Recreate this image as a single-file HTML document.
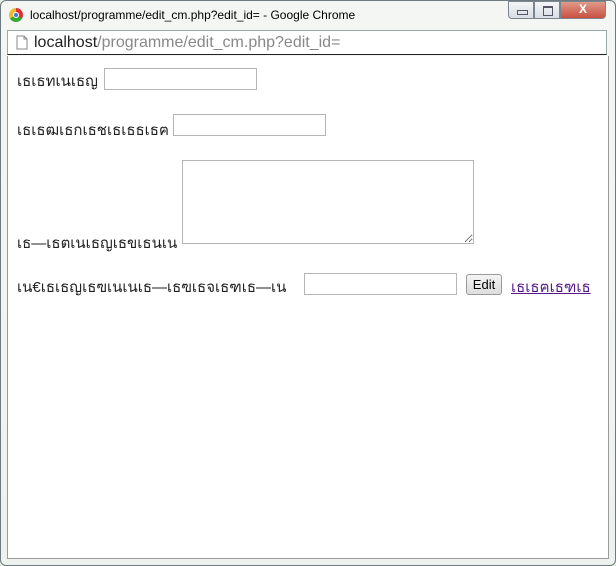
<!DOCTYPE html>
<html><head><meta charset="utf-8"><style>
body{margin:0;width:616px;height:566px;overflow:hidden;background:#e9efe9;font-family:"Liberation Sans",sans-serif;position:relative}
.frame{position:absolute;left:0;top:0;width:614px;height:564px;border:1px solid #6f7a80;border-radius:6px;background:linear-gradient(#f4f6f4,#eef2ee)}
.title{position:absolute;left:30px;top:8px;font-size:12px;color:#000}
.logo{position:absolute;left:9px;top:8px;width:14px;height:14px;border-radius:50%;background:conic-gradient(#d33 0 120deg,#3a3 120deg 240deg,#eb3 240deg);}
.logo:after{content:"";position:absolute;left:4px;top:4px;width:6px;height:6px;border-radius:50%;background:#47c;border:1px solid #fff;box-sizing:border-box}
.btns{position:absolute;left:508px;top:1px;height:19px;display:flex}
.btns div{height:18px;border:1px solid #7a8590;box-sizing:border-box;background:linear-gradient(#f4f6f8,#d8dee4);position:relative}
.addr{position:absolute;left:7px;top:30px;width:600px;height:25px;background:#fff;border:1px solid #9aa;border-bottom:1px solid #222;box-sizing:border-box}
.addr span{position:absolute;left:26px;top:3px;font-size:16px;color:#888}
.addr b{font-weight:normal;color:#222}
.content{position:absolute;left:7px;top:56px;width:602px;height:503px;background:#fff;border:1px solid #999;border-top:none;box-sizing:border-box;font-size:15px;color:#222}
.row{position:absolute;left:9px;white-space:nowrap}
input.t{position:absolute;height:22px;border:1px solid #b5b5b5;box-sizing:border-box}
a{color:#551a8b}
</style></head><body>
<div class="frame"></div>
<div class="logo"></div>
<div class="title">localhost/programme/edit_cm.php?edit_id= - Google Chrome</div>
<div class="btns"><div style="width:26px;border-radius:0 0 0 4px"><span style="position:absolute;left:8px;top:8px;width:9px;height:3px;border:1px solid #556"></span></div><div style="width:26px"><span style="position:absolute;left:8px;top:4px;width:8px;height:7px;border:1px solid #556;border-top-width:2px"></span></div><div style="width:46px;background:linear-gradient(#e09a8a,#c85040);border-radius:0 0 4px 0;color:#fff;font-size:12px;text-align:center;font-weight:bold">X</div></div>
<div class="addr"><svg style="position:absolute;left:8px;top:4px" width="12" height="15"><path d="M1 1h7l3 3v10H1z M8 1v3h3" fill="#fff" stroke="#888"/></svg><span><b>localhost</b>/programme/edit_cm.php?edit_id=</span></div>
<div class="content">
<div class="row" style="top:13px">เธเธทเนเธญ</div>
<input class="t" style="left:96px;top:12px;width:153px">
<div class="row" style="top:62px">เธเธฒเธกเธชเธเธธเธฅ</div>
<input class="t" style="left:165px;top:58px;width:153px">
<textarea style="position:absolute;left:174px;top:104px;width:292px;height:84px;border:1px solid #b5b5b5;box-sizing:border-box;resize:both"></textarea>
<div class="row" style="top:175px">เธ—เธตเนเธญเธขเธนเน</div>
<div class="row" style="top:219px">เน€เธเธญเธฃเนเนเธ—เธฃเธจเธฑเธ—เน</div>
<input class="t" style="left:296px;top:217px;width:153px">
<button style="position:absolute;left:458px;top:218px;height:21px;width:36px;font-size:13px;padding:0;border:1px solid #999;border-radius:3px;background:linear-gradient(#f4f4f4,#ddd)">Edit</button>
<a class="row" style="left:503px;top:219px" href="#">เธเธฅเธฑเธ</a>
</div>
</body></html>
